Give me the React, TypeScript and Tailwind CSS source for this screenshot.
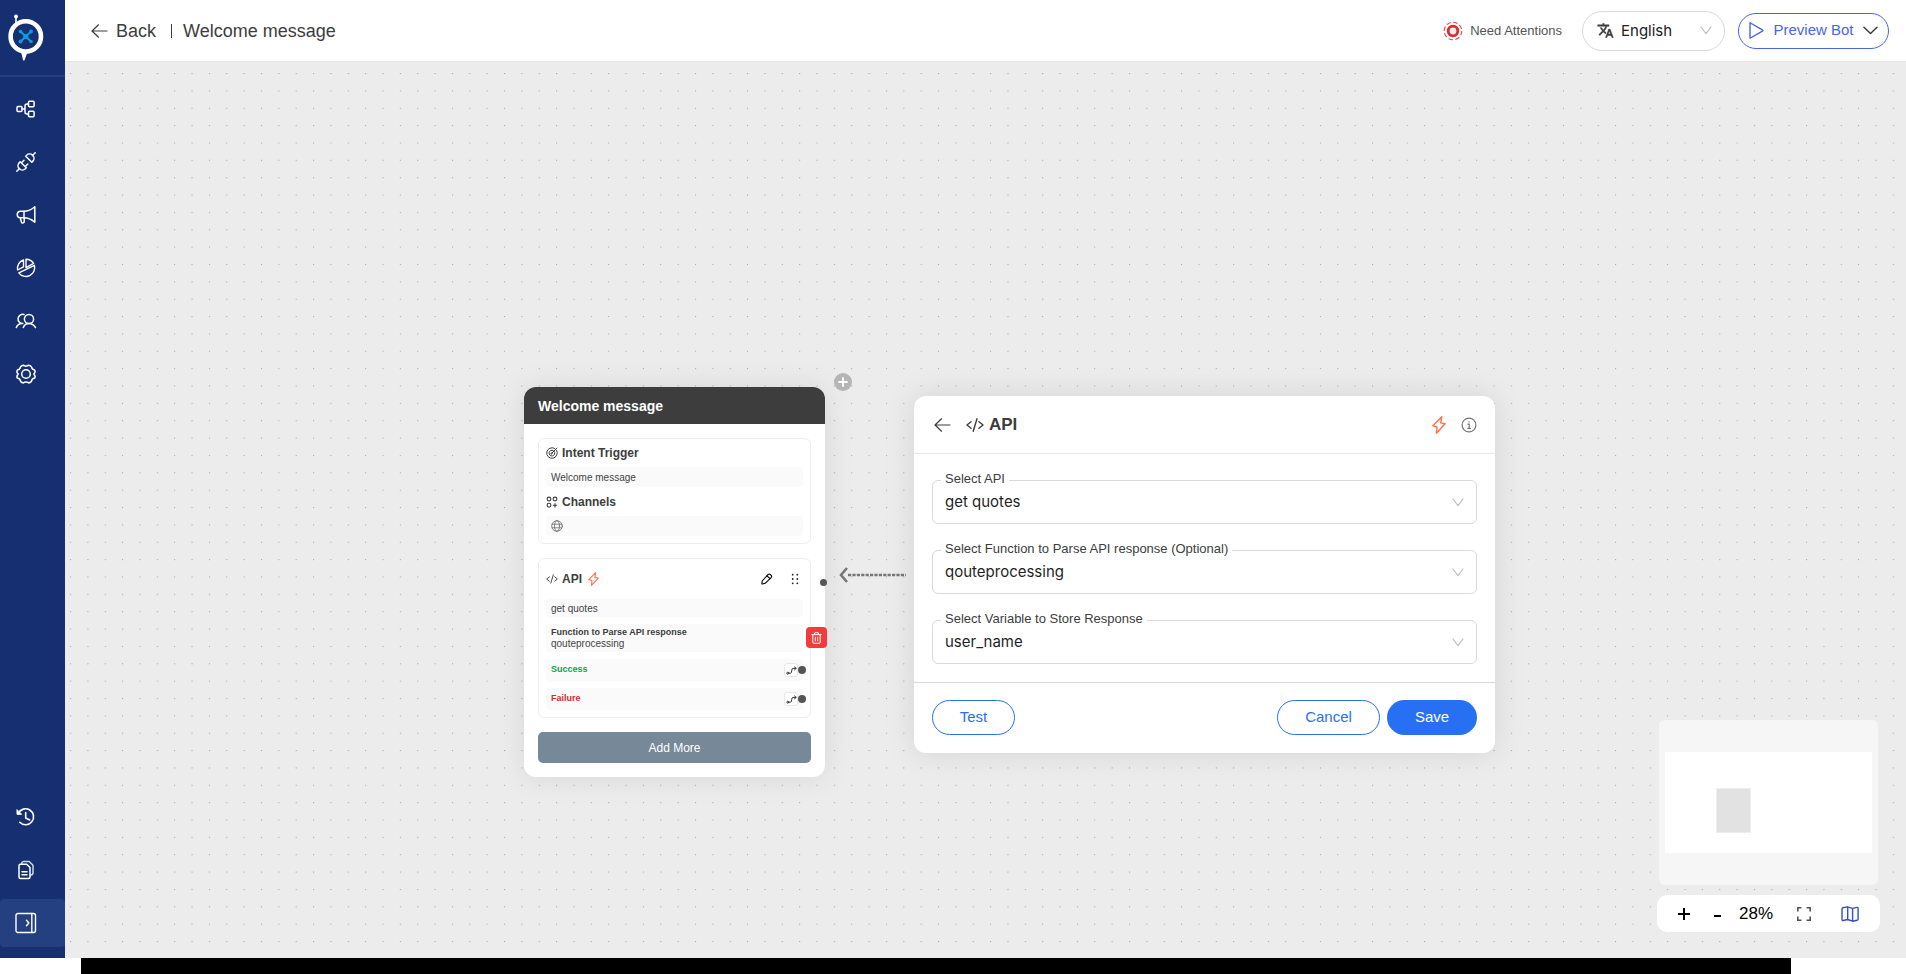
import React, { useState } from 'react';

type IconProps = { className?: string };

const svgProps = {
  fill: 'none',
  stroke: 'currentColor',
  strokeLinecap: 'round' as const,
  strokeLinejoin: 'round' as const,
  'aria-hidden': true,
};

const Logo = () => (
  <svg width="51" height="62" viewBox="0 0 51 62" aria-hidden="true">
    <path d="M21 50h9l-3 3.5-2.6 7h-1.2L21.3 53z" fill="#fff" />
    <path d="M16 17v9" stroke="#fff" strokeWidth="1.6" />
    <circle cx="16" cy="16.6" r="2" fill="#fff" />
    <circle cx="25.8" cy="36.4" r="15.2" fill="#162f70" stroke="#fff" strokeWidth="4.6" />
    <path d="M20.5 31.5l10.5 10M31 31.5l-10.5 10" stroke="#0a9be0" strokeWidth="2" />
    <g fill="#0a9be0">
      <circle cx="20.5" cy="31.5" r="1.8" />
      <circle cx="31" cy="31.5" r="2" />
      <circle cx="20.5" cy="41.5" r="2" />
      <circle cx="31" cy="41.5" r="1.8" />
      <circle cx="25.8" cy="36.5" r="2.6" />
    </g>
  </svg>
);

const FlowIcon = () => (
  <svg width="20" height="20" viewBox="0 0 20 20" strokeWidth="1.5" {...svgProps}>
    <rect x="1" y="7.5" width="5" height="5" rx="1" />
    <rect x="12.5" y="2.2" width="5.6" height="5.6" rx="1" />
    <rect x="12.5" y="12.2" width="5.6" height="5.6" rx="1" />
    <path d="M6 10h3M12.5 5H11q-2 0-2 2v6q0 2 2 2h1.5" />
  </svg>
);

const PlugIcon = () => (
  <svg width="20" height="20" viewBox="0 0 20 20" strokeWidth="1.5" {...svgProps}>
    <path d="M.8 19.2l2.7-2.7M16.5 3.5L19.2.8" />
    <path d="M4.2 9.7l6.1 6.1-.9.9a4.2 4.2 0 0 1-6.100-6.100z" />
    <path d="M9.7 4.2l6.1 6.1.9-.9a4.2 4.2 0 0 0-6.100-6.100z" />
    <path d="M6 10.2l2-2M9.8 14l2-2" />
  </svg>
);

const MegaphoneIcon = () => (
  <svg width="20" height="20" viewBox="0 0 20 20" strokeWidth="1.5" {...svgProps}>
    <path d="M8 6.3c4 0 7.5-1.6 10.800-4.500v15.400c-3.300-2.800-6.800-4.400-10.800-4.400H4.500a3.250 3.250 0 0 1 0-6.500z" />
    <path d="M8 6.3v6.500M4.300 13l1.200 4.200c.3 1 2.700 1 2.700-.4V13" />
  </svg>
);

const PieIcon = () => (
  <svg width="20" height="20" viewBox="0 0 20 20" strokeWidth="1.4" {...svgProps}>
    <path d="M10 1.2a8.800 8.800 0 0 1 7.600 4.200L10 9.600z" />
    <path d="M7.5 2v6.800l-5.900 3.200A8.800 8.800 0 0 1 7.500 2z" />
    <path d="M18.4 7.300a8.800 8.800 0 0 1-15.600 7.500z" />
  </svg>
);

const PeopleIcon = () => (
  <svg width="22" height="20" viewBox="0 0 22 20" strokeWidth="1.5" {...svgProps}>
    <circle cx="14" cy="8" r="4.6" />
    <path d="M8.3 16.500c1-2.500 3.200-3.900 5.700-3.900s4.900 1.400 6.500 3.900" />
    <path d="M9 3.500a4.600 4.600 0 1 0-1.200 9M6 12.600c-2 .3-3.800 1.600-4.700 3.900" />
  </svg>
);

const GearIcon = () => (
  <svg width="20" height="20" viewBox="0 0 20 20" strokeWidth="1.5" {...svgProps}>
    <circle cx="10" cy="10" r="4.3" />
    <path d="M7.3 1.2c1.800 1.300 3.600 1.300 5.400 0 1.500.2 2.400.8 2.900 2 .2 1.600 1.200 2.500 3 2.900.7 1.200.6 2.300-.1 3-.9.8-.9 1.200 0 2 .7.700.8 1.800.1 3-1.800.4-2.800 1.300-3 2.800-.5 1.200-1.400 1.800-2.900 2-1.800-1.300-3.600-1.300-5.400 0-1.500-.2-2.400-.8-2.900-2-.2-1.500-1.200-2.400-3-2.800-.7-1.200-.6-2.300.1-3 .9-.8.9-1.200 0-2-.7-.7-.8-1.800-.1-3 1.800-.4 2.800-1.300 3-2.900.5-1.200 1.400-1.800 2.900-2z" />
  </svg>
);

const HistoryIcon = () => (
  <svg width="20" height="20" viewBox="0 0 20 20" strokeWidth="1.6" {...svgProps}>
    <path d="M2.3 6.5a8 8 0 1 1 1.500 8.800" />
    <path d="M1 3v4.300h4.300z" fill="currentColor" strokeWidth="1" />
    <path d="M9.7 5.5V11l4 2" />
  </svg>
);

const DocsIcon = () => (
  <svg width="20" height="20" viewBox="0 0 20 20" strokeWidth="1.5" {...svgProps}>
    <path d="M4.5 4.2h6.200l3.300 3.300v9.500q0 1.500-1.500 1.500h-8q-1.500 0-1.500-1.500V5.700q0-1.500 1.500-1.500z" />
    <path d="M5.5 3.5c.3-1.300 1-2 2.200-2h5.500l3.800 3.800v7.500c0 1.400-.6 2.100-2 2.300" opacity=".8" />
    <path d="M6 11.8h5M6 14.8h5" />
  </svg>
);

const ExpandIcon = () => (
  <svg width="22" height="22" viewBox="0 0 22 22" strokeWidth="1.4" {...svgProps}>
    <rect x="1" y="1.5" width="19.5" height="19" rx="2" />
    <path d="M16.8 1.5v19M11.5 8.300l2.300 2.700-2.300 2.700" />
  </svg>
);

const ArrowLeft = ({ className }: IconProps) => (
  <svg width="17" height="14" viewBox="0 0 17 14" strokeWidth="1.2" className={className} {...svgProps}>
    <path d="M16 7H1M7.5.8L1 7l6.500 6.200" />
  </svg>
);

const Chevron = ({ className }: IconProps) => (
  <svg width="12" height="9" viewBox="0 0 12 9" strokeWidth="1.2" className={className} {...svgProps}>
    <path d="M1 1l5 6.700L11 1" />
  </svg>
);

const CodeIcon = ({ className }: IconProps) => (
  <svg viewBox="0 0 18 14" strokeWidth="1.4" className={className} {...svgProps}>
    <path d="M5 3.8L1 7l4 3.200M13 3.800L17 7l-4 3.200M11 .8L7.200 13.200" />
  </svg>
);

const BoltIcon = ({ className }: IconProps) => (
  <svg viewBox="0 0 14 18" strokeWidth="1.4" className={className} {...svgProps}>
    <path d="M9.8.8L.9 9.800l4.100 1.200-.6 6.200 8.700-9.400-4.300-.9z" />
  </svg>
);

const AlertIcon = () => (
  <svg width="20" height="20" viewBox="0 0 20 20" fill="none" aria-hidden="true">
    <circle cx="10" cy="10" r="8.8" stroke="#ef4444" strokeWidth="1.1" strokeDasharray="4.5 2.4" />
    <circle cx="10" cy="10" r="4.8" fill="#fde8e8" stroke="#d32f2f" strokeWidth="2.8" />
  </svg>
);

const TranslateIcon = () => (
  <svg width="17" height="17" viewBox="0 0 24 24" fill="#3d3d3d" stroke="#3d3d3d" strokeWidth="0.7" aria-hidden="true">
    <path d="M12.87 15.07l-2.54-2.51.03-.03A17.52 17.52 0 0 0 14.07 6H17V4h-7V2H8v2H1v1.99h11.17C11.5 7.92 10.44 9.75 9 11.35 8.07 10.32 7.3 9.19 6.69 8h-2c.73 1.63 1.73 3.17 2.98 4.56l-5.09 5.02L4 19l5-5 3.11 3.11.76-2.04zM18.5 10h-2L12 22h2l1.12-3h4.75L21 22h2l-4.500-12zm-2.62 7l1.62-4.33L19.12 17h-3.24z" />
  </svg>
);

const TargetIcon = () => (
  <svg width="12" height="12" viewBox="0 0 12 12" strokeWidth="1" {...svgProps}>
    <path d="M10.6 3.3a5.300 5.300 0 1 1-1.900-1.900" />
    <path d="M8.5 4.6a2.900 2.900 0 1 1-1.300-1.200" />
    <path d="M6 6l5-5M5.5 5.8a.7.700 0 1 0 .8.800" />
  </svg>
);

const ChannelsIcon = () => (
  <svg width="12" height="12" viewBox="0 0 12 12" strokeWidth="1.1" {...svgProps}>
    <circle cx="3" cy="3" r="1.9" />
    <circle cx="9" cy="3" r="1.9" />
    <circle cx="3" cy="9.2" r="1.9" />
    <path d="M9 7.5v3.400M7.300 9.200h3.400" />
  </svg>
);

const GlobeIcon = () => (
  <svg width="12" height="12" viewBox="0 0 12 12" strokeWidth="0.9" {...svgProps}>
    <circle cx="6" cy="6" r="5.3" />
    <ellipse cx="6" cy="6" rx="2.5" ry="5.3" />
    <path d="M1.2 4.2h9.600M1.200 7.800h9.600" />
  </svg>
);

const PencilIcon = () => (
  <svg width="12" height="12" viewBox="0 0 12 12" strokeWidth="1.1" {...svgProps}>
    <path d="M1.2 8L7 1.600q1.100-1.100 2.300-.1l.9.900q1 1.200-.1 2.300L4.200 10.300l-2.800.7q-.6.100-.5-.5z" />
    <path d="M6 2.8l3 2.900" />
  </svg>
);

const GripIcon = () => (
  <svg width="8" height="12" viewBox="0 0 8 12" fill="currentColor" aria-hidden="true">
    {[1.7, 6, 10.3].map(y => (
      <React.Fragment key={y}>
        <circle cx="1.7" cy={y} r="0.9" />
        <circle cx="6.3" cy={y} r="0.9" />
      </React.Fragment>
    ))}
  </svg>
);

const RouteIcon = () => (
  <svg width="11" height="11" viewBox="0 0 11 11" strokeWidth="1" {...svgProps}>
    <circle cx="1.8" cy="8.2" r="1" />
    <path d="M3 8.2h1.500q1.200 0 1.200-2.400T7 3.400h3M8.500 1.900l1.700 1.500-1.700 1.500" />
  </svg>
);

const TrashIcon = () => (
  <svg width="11" height="12" viewBox="0 0 11 12" strokeWidth="1" {...svgProps}>
    <path d="M.8 2.700h9.400M3.500 2.500V.8h4v1.700M1.800 2.900v7.400q0 1 1 1h5.400q1 0 1-1V2.900M4.300 5.200v3.700M6.700 5.200v3.700" />
  </svg>
);

const navItems = [
  { label: 'Flows', icon: <FlowIcon /> },
  { label: 'Integrations', icon: <PlugIcon /> },
  { label: 'Campaigns', icon: <MegaphoneIcon /> },
  { label: 'Analytics', icon: <PieIcon /> },
  { label: 'Contacts', icon: <PeopleIcon /> },
  { label: 'Settings', icon: <GearIcon /> },
];

const bottomItems = [
  { label: 'History', icon: <HistoryIcon /> },
  { label: 'Documents', icon: <DocsIcon /> },
];

const NavButton = ({ label, children, active }: { label: string; children: React.ReactNode; active?: boolean }) => (
  <button
    aria-label={label}
    className={`flex h-12 w-full items-center rounded-sm text-white ${active ? 'bg-[#244080]' : ''}`}
  >
    <span className="flex w-[51px] justify-center">{children}</span>
  </button>
);

const Sidebar = () => (
  <aside className="flex w-[65px] shrink-0 flex-col bg-[#162f70]">
    <div className="h-[77px] border-b-2 border-[#244080]">
      <Logo />
    </div>
    <nav className="flex grow flex-col gap-[5px] pt-2 pb-[11px]">
      {navItems.map(item => (
        <NavButton key={item.label} label={item.label}>{item.icon}</NavButton>
      ))}
      <div className="mt-auto flex flex-col gap-[5px]">
        {bottomItems.map(item => (
          <NavButton key={item.label} label={item.label}>{item.icon}</NavButton>
        ))}
        <NavButton label="Expand menu" active><ExpandIcon /></NavButton>
      </div>
    </nav>
  </aside>
);

const Header = () => (
  <header className="flex h-[62px] shrink-0 items-center border-b border-gray-200 bg-white pr-[17px] pl-[26px] text-[#3d3d3d]">
    <button className="flex items-center gap-2 text-lg">
      <ArrowLeft />
      Back
    </button>
    <span className="ml-[15px] h-[14px] w-px bg-[#3d3d3d]" />
    <h1 className="ml-[11px] text-lg">Welcome message</h1>
    <div className="ml-auto flex items-center">
      <div className="flex items-center gap-[7px] text-[13px] text-[#555]">
        <AlertIcon />
        Need Attentions
      </div>
      <label className="relative ml-5 flex h-10 w-[143px] items-center rounded-full border border-[#d9d9d9] pl-[14px] text-[#222]">
        <TranslateIcon />
        <select aria-label="Language" className="absolute inset-0 appearance-none rounded-full bg-transparent pt-px pl-[38px] font-[Inter,sans-serif] text-[15px] outline-none">
          <option>English</option>
        </select>
        <Chevron className="mr-3 ml-auto text-[#bfbfbf]" />
      </label>
      <button className="ml-[13px] flex h-9 w-[151px] items-center justify-between rounded-full border border-[#4a64e8] px-[10px] text-[15px] text-[#4a64e8]">
        <svg width="15" height="17" viewBox="0 0 15 17" strokeWidth="1.4" {...svgProps}>
          <path d="M1 1.300v14.400q0 .5.500.3l12.300-7.200q.4-.3 0-.6L1.500 1q-.5-.2-.5.300z" />
        </svg>
        Preview Bot
        <svg width="15" height="9" viewBox="0 0 15 9" strokeWidth="1.5" className="text-[#3d3d3d]" {...svgProps}>
          <path d="M1 1.200l6.500 6.300L14 1.200" />
        </svg>
      </button>
    </div>
  </header>
);

const OutcomeRow = ({ label, color }: { label: string; color: string }) => (
  <div className={`relative flex h-[22px] items-center rounded-sm bg-[#fafafa] pr-[5px] pl-[5px] text-[9px] font-bold ${color}`}>
    {label}
    <button aria-label={`Route ${label}`} className="ml-auto flex size-[14px] items-center justify-center rounded-[3px] border border-gray-200 bg-white text-[#333]">
      <RouteIcon />
    </button>
    <span className="absolute -right-[3px] size-2 rounded-full bg-[#555]" />
  </div>
);

const FlowNode = () => (
  <section className="absolute top-[325px] left-[459px] w-[301px] rounded-xl bg-white text-[#3d3d3d] shadow-[0_0_30px_rgba(0,0,0,0.09)]">
    <h2 className="flex h-[37px] items-center rounded-t-xl bg-[#3d3d3d] px-[14px] text-sm font-bold text-white">Welcome message</h2>
    <div className="flex flex-col gap-[14px] p-[14px]">
      <div className="rounded-md border border-[#eee] px-[7px] pt-1 pb-[7px]">
        <h3 className="flex h-5 items-center gap-1 text-xs font-bold"><TargetIcon />Intent Trigger</h3>
        <p className="mt-1 flex h-5 items-center rounded-sm bg-[#fafafa] px-[5px] text-[10px] text-[#444]">Welcome message</p>
        <h3 className="mt-[5px] flex h-5 items-center gap-1 text-xs font-bold"><ChannelsIcon />Channels</h3>
        <p className="mt-1 flex h-5 items-center rounded-sm bg-[#fafafa] px-[5px] text-[#777]"><GlobeIcon /></p>
      </div>

      <div className="relative flex flex-col gap-[7px] rounded-md border border-[#eee] px-[7px] pb-[7px]">
        <div className="-mb-[7px] flex h-10 items-center gap-1">
          <CodeIcon className="h-[10px] w-3" />
          <h3 className="text-xs font-bold">API</h3>
          <BoltIcon className="ml-[2px] h-[14px] w-[11px] text-[#ff7043]" />
          <button aria-label="Edit" className="ml-auto text-black"><PencilIcon /></button>
          <button aria-label="Move" className="mr-1 ml-[14px] text-[#222]"><GripIcon /></button>
        </div>
        <p className="flex h-[18px] items-center rounded-sm bg-[#fafafa] px-[5px] text-[10px] text-[#444]">get quotes</p>
        <div className="flex h-7 flex-col justify-center rounded-sm bg-[#fafafa] px-[5px] leading-3">
          <p className="text-[9px] font-bold leading-3">Function to Parse API response</p>
          <p className="text-[10px] leading-3 text-[#444]">qouteprocessing</p>
        </div>
        <OutcomeRow label="Success" color="text-[#0ba34f]" />
        <OutcomeRow label="Failure" color="text-[#d42a2f]" />
        <span className="absolute top-5 -right-[17px] size-[7px] rounded-full bg-[#555]" />
        <button aria-label="Delete" className="absolute top-[68px] -right-[17px] flex size-[21px] items-center justify-center rounded-sm bg-[#f03c3c] text-white">
          <TrashIcon />
        </button>
      </div>

      <button className="h-[31px] rounded-[5px] bg-[#778899] text-xs text-white">Add More</button>
    </div>
    <button aria-label="Add step" className="absolute -top-[14px] -right-[27px] flex size-[18px] items-center justify-center rounded-full bg-[#b5b5b5] text-white">
      <svg width="10" height="10" viewBox="0 0 10 10" strokeWidth="1.8" {...svgProps}>
        <path d="M5 1v8M1 5h8" />
      </svg>
    </button>
  </section>
);

const Connector = () => (
  <svg width="68" height="16" viewBox="0 0 68 16" fill="none" stroke="#777" className="absolute top-[505px] left-[773px]" aria-hidden="true">
    <path d="M9 1L3 8l6 7" strokeWidth="2.6" />
    <path d="M10 8h58" strokeWidth="2.4" strokeDasharray="3.2 1.2" />
  </svg>
);

const SelectField = ({ id, label, value }: { id: string; label: string; value: string }) => (
  <div className="relative flex h-11 items-center rounded-md border border-[#d9d9d9]">
    <label htmlFor={id} className="absolute -top-[11px] left-2 z-10 bg-white px-1 text-[13px] leading-[18px] text-[#3d3d3d]">{label}</label>
    <select id={id} className="h-full w-full appearance-none bg-transparent pt-px pr-8 pl-3 font-[Inter,sans-serif] text-[15px] text-[#1f1f1f] outline-none">
      <option>{value}</option>
    </select>
    <Chevron className="pointer-events-none absolute right-3 text-[#bfbfbf]" />
  </div>
);

const ApiPanel = () => (
  <form onSubmit={e => e.preventDefault()} className="absolute top-[334px] left-[849px] w-[581px] rounded-xl bg-white text-[#3d3d3d] shadow-[0_0_32px_rgba(0,0,0,0.1)]">
    <div className="flex h-[58px] items-center border-b border-gray-200 pr-[18px] pl-5">
      <button type="button" aria-label="Go back"><ArrowLeft /></button>
      <CodeIcon className="ml-[15px] h-[14px] w-[18px]" />
      <h2 className="ml-[5px] text-[17px] font-bold">API</h2>
      <BoltIcon className="ml-auto h-[18px] w-[14px] text-[#ff7043]" />
      <button type="button" aria-label="Info" className="ml-[15px] text-[#777]">
        <svg width="16" height="16" viewBox="0 0 16 16" strokeWidth="1.2" {...svgProps}>
          <circle cx="8" cy="8" r="6.9" />
          <path d="M7 7.200h1.200v4M6.800 11.300h2.700M8 4.600v.3" />
        </svg>
      </button>
    </div>
    <div className="flex flex-col gap-[26px] px-[18px] pt-[26px] pb-[18px]">
      <SelectField id="api" label="Select API" value="get quotes" />
      <SelectField id="parser" label="Select Function to Parse API response (Optional)" value="qouteprocessing" />
      <SelectField id="variable" label="Select Variable to Store Response" value="user_name" />
    </div>
    <div className="flex items-center gap-[7px] border-t border-[#d9d9d9] px-[18px] pt-[17px] pb-[18px] text-[15px]">
      <button type="button" className="mr-auto h-[35px] w-[83px] rounded-full border border-[#2770f3] text-[#2770f3]">Test</button>
      <button type="button" className="h-[35px] w-[103px] rounded-full border border-[#2770f3] text-[#2770f3]">Cancel</button>
      <button type="submit" className="h-[35px] w-[90px] rounded-full bg-[#2770f3] text-white">Save</button>
    </div>
  </form>
);

const CanvasControls = () => {
  const [showMap, setShowMap] = useState(true);

  return (
    <div className="absolute right-[26px] bottom-[26px] w-[223px]">
      {showMap && (
        <div className="mx-[2px] mb-[10px] h-[165px] rounded-md bg-[#f6f6f6] px-[6px] py-8">
          <svg viewBox="0 0 207 101" className="h-full w-full" aria-hidden="true">
            <rect width="207" height="101" fill="#fff" />
            <rect x="51.5" y="36.5" width="34" height="44" fill="#e2e2e2" stroke="#eee" />
          </svg>
        </div>
      )}
      <div className="flex h-[37px] items-center rounded-[10px] bg-white px-[21px] text-[17px] text-black">
        <button aria-label="Zoom in" className="w-3">
          <svg width="12" height="12" viewBox="0 0 12 12" fill="none" stroke="currentColor" strokeWidth="2" aria-hidden="true">
            <path d="M6 0v12M0 6h12" />
          </svg>
        </button>
        <button aria-label="Zoom out" className="ml-6 h-3 w-[7px]">
          <svg width="7" height="12" viewBox="0 0 7 12" fill="none" stroke="currentColor" strokeWidth="2" aria-hidden="true">
            <path d="M0 8h7" />
          </svg>
        </button>
        <span className="ml-[18px]">28%</span>
        <button aria-label="Fit to screen" className="ml-6 text-[#555]">
          <svg width="14" height="14" viewBox="0 0 14 14" fill="none" stroke="currentColor" strokeWidth="1.6" aria-hidden="true">
            <path d="M.8 4.5V.8h3.700M9.500.8h3.700v3.700M13.200 9.500v3.700H9.500M4.500 13.200H.8V9.500" />
          </svg>
        </button>
        <button aria-label="Toggle map" onClick={() => setShowMap(!showMap)} className="ml-auto text-[#3550c0]">
          <svg width="18" height="16" viewBox="0 0 18 16" strokeWidth="1.4" {...svgProps}>
            <path d="M1 3q0-1 1-1.200L6.300.9l5.200 1.500 4.300-1q1.300-.2 1.300 1v10.800q0 .8-1 1l-4.400 1-5.200-1.700-4.200 1Q1 14.800 1 13.500zM6.700 1v12.500M11.600 2.500v12.700" />
          </svg>
        </button>
      </div>
    </div>
  );
};

const App: React.FC = () => {
  return (
    <div className="flex min-h-screen flex-col bg-white font-['Liberation_Sans',Arial,sans-serif]">
      <div className="flex grow">
        <Sidebar />
        <div className="flex grow flex-col">
          <Header />
          <main className="relative grow overflow-hidden bg-[#ececec]">
            <svg className="absolute inset-0 h-full w-full" aria-hidden="true">
              <defs>
                <pattern id="dots" x="5" y="11" width="17.36" height="17.36" patternUnits="userSpaceOnUse">
                  <circle cx="0.6" cy="0.6" r="0.6" fill="#999" />
                </pattern>
              </defs>
              <rect width="100%" height="100%" fill="url(#dots)" />
            </svg>
            <FlowNode />
            <Connector />
            <ApiPanel />
            <CanvasControls />
          </main>
        </div>
      </div>
      <footer className="mr-[115px] ml-[81px] h-4 bg-black" />
    </div>
  );
};

export default App;
